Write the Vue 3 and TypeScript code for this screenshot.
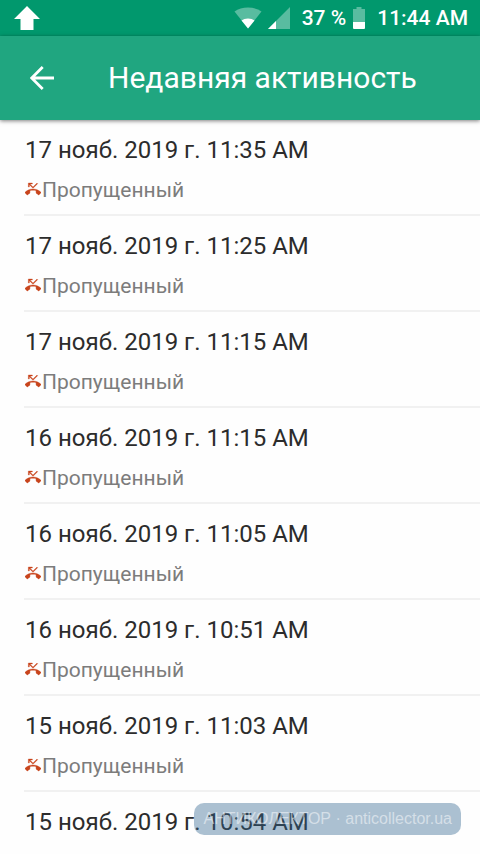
<script setup lang="ts">
interface CallRecord {
  id: number
  date: string
  status: string
}

const dates: string[] = [
  '17 нояб. 2019 г. 11:35 AM',
  '17 нояб. 2019 г. 11:25 AM',
  '17 нояб. 2019 г. 11:15 AM',
  '16 нояб. 2019 г. 11:15 AM',
  '16 нояб. 2019 г. 11:05 AM',
  '16 нояб. 2019 г. 10:51 AM',
  '15 нояб. 2019 г. 11:03 AM',
  '15 нояб. 2019 г. 10:54 AM',
]

const calls: CallRecord[] = dates.map((date, id) => ({ id, date, status: 'Пропущенный' }))
</script>

<template>
  <div class="screen">
    <div class="status-bar">
      <svg class="upload" viewBox="0 0 26 24" aria-hidden="true">
        <path d="M13 0 26 13H19.500V24H6.500V13H0Z" fill="#fff" />
      </svg>
      <div class="indicators">
        <svg class="wifi" viewBox="0 0 28 22" aria-hidden="true">
          <path d="M14 21.500 0.500 4.500Q6 0.500 14 0.500T27.500 4.500Z" fill="#fff" fill-opacity="0.35" />
          <path d="M14 21.500 7.500 13.400Q10 11.500 14 11.500T20.500 13.400Z" fill="#fff" />
        </svg>
        <svg class="signal" viewBox="0 0 22 22" aria-hidden="true">
          <path d="M22 0V22H0Z" fill="#fff" fill-opacity="0.35" />
          <path d="M8 14V22H0Z" fill="#fff" />
        </svg>
        <span class="percent">37 %</span>
        <svg class="battery" viewBox="0 0 12 22" aria-hidden="true">
          <path d="M3.500 0H8.500V2H12V15H0V2H3.500Z" fill="#fff" fill-opacity="0.35" />
          <path d="M0 15H12V21Q12 22 11 22H1Q0 22 0 21Z" fill="#fff" />
        </svg>
        <span class="clock">11:44 AM</span>
      </div>
    </div>

    <header class="toolbar">
      <button class="back" type="button" aria-label="Назад">
        <svg viewBox="0 0 24 24" aria-hidden="true">
          <path d="M12.700 1 1.700 12 12.700 23M2 12H24" fill="none" stroke="#fff" stroke-width="2.800" />
        </svg>
      </button>
      <h1>Недавняя активность</h1>
    </header>

    <ul class="calls">
      <li v-for="call in calls" :key="call.id" class="call">
        <span class="date">{{ call.date }}</span>
        <span class="status">
          <svg class="missed" viewBox="0 0 24 24" aria-hidden="true">
            <path
              d="M6.500 5.500 12 11l7-7-1-1-6 6-4.500-4.500H11V3H5v6h1.500V5.500zm17.210 11.170C20.660 13.780 16.540 12 12 12 7.460 12 3.340 13.780.290 16.670c-.180.180-.290.430-.290.710s.110.530.290.710l2.480 2.480c.180.180.430.290.710.290.270 0 .520-.110.700-.280.790-.740 1.690-1.360 2.660-1.850.330-.160.560-.500.560-.900v-3.100c1.450-.480 3-.730 4.600-.730 1.600 0 3.150.250 4.600.720v3.100c0 .390.230.740.560.900.980.490 1.870 1.120 2.670 1.850.180.180.430.280.700.280.280 0 .530-.110.710-.290l2.480-2.480c.180-.180.290-.430.290-.710s-.120-.520-.300-.700z"
              fill="#c8441c"
              stroke="#c8441c"
              stroke-width="0.500"
            />
          </svg>
          <span>{{ call.status }}</span>
        </span>
      </li>
    </ul>

    <div class="watermark">АНТИКОЛЕКТОР · anticollector.ua</div>
  </div>
</template>

<style>
body {
  background: #fff;
}
</style>

<style scoped>
.screen {
  position: relative;
  display: flex;
  flex-direction: column;
  height: 100vh;
  overflow: hidden;
  font-family: Roboto, "Noto Sans", sans-serif;
  background: #fefefe;
}

.status-bar {
  display: flex;
  flex: none;
  align-items: center;
  justify-content: space-between;
  height: 36px;
  padding: 0 12px 0 14px;
  background: #01986d;
  color: #fff;
  font-size: 21px;
  font-weight: 500;
}

.upload {
  width: 26px;
  height: 24px;
}

.indicators {
  display: flex;
  align-items: center;
}

.wifi {
  width: 28px;
  height: 22px;
}

.signal {
  width: 22px;
  height: 22px;
  margin: 0 12px 0 6px;
}

.battery {
  width: 12px;
  height: 22px;
  margin: 0 12px 0 7px;
}

.toolbar {
  position: relative;
  display: flex;
  flex: none;
  align-items: center;
  height: 84px;
  background: #20a680;
  box-shadow: 0 1px 4px rgba(0, 0, 0, 0.5);
}

.back {
  display: flex;
  align-items: center;
  justify-content: center;
  width: 84px;
  height: 84px;
  padding: 0;
  border: 0;
  background: none;
}

.back svg {
  width: 24px;
  height: 24px;
}

h1 {
  margin: 0 0 0 24px;
  color: #fff;
  font-size: 30px;
  font-weight: 400;
  line-height: 38px;
  white-space: nowrap;
}

.calls {
  flex: 1;
  min-height: 0;
  margin: 0;
  padding: 0 0 0 24px;
  overflow: hidden;
  list-style: none;
}

.call {
  display: flex;
  flex-direction: column;
  gap: 12px;
  height: 96px;
  padding-top: 16px;
  box-sizing: border-box;
  border-bottom: 2px solid #f1f1f1;
}

.date,
.status {
  padding-left: 1px;
  line-height: 28px;
  white-space: nowrap;
}

.date {
  color: #2c2c2c;
  font-size: 24px;
}

.status {
  display: flex;
  align-items: center;
  gap: 1px;
  color: #7c7c7c;
  font-size: 21px;
}

.missed {
  width: 16px;
  height: 16px;
  margin-bottom: 2px;
}

.watermark {
  position: absolute;
  right: 19px;
  bottom: 19px;
  padding: 0 9px;
  border-radius: 10px;
  background: rgba(47, 100, 143, 0.4);
  color: rgba(255, 255, 255, 0.5);
  font-family: "Liberation Sans", Arial, sans-serif;
  font-size: 16px;
  line-height: 32px;
  white-space: nowrap;
}
</style>
